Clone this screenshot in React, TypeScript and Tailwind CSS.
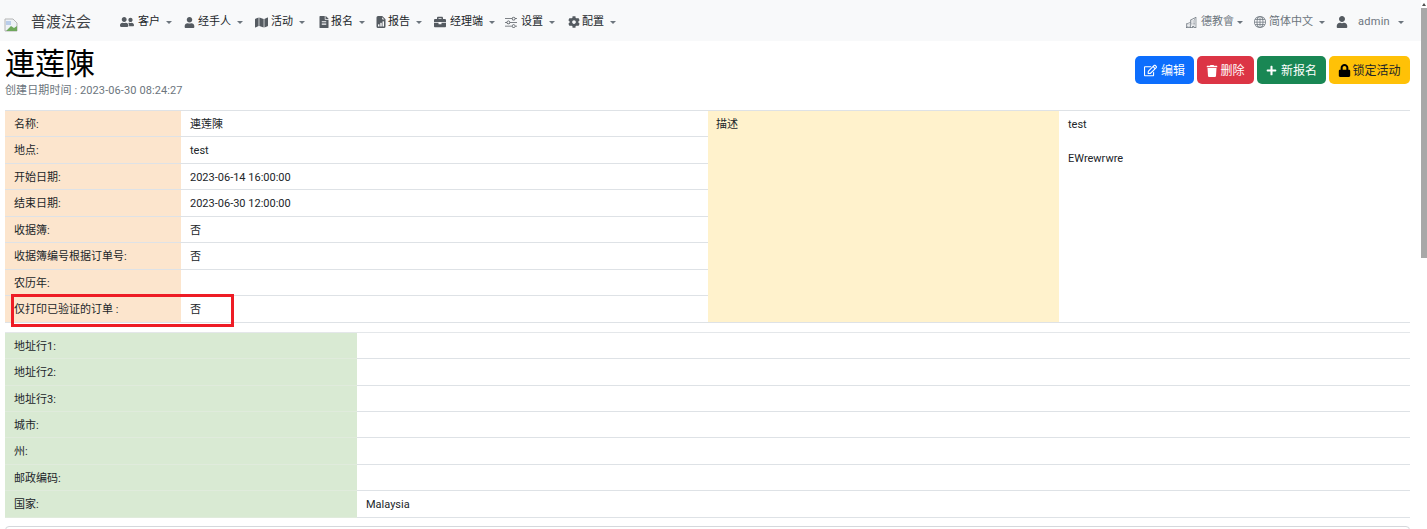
import React from "react";
import { FaUserFriends, FaUser, FaMap, FaFileAlt, FaBriefcase, FaCog, FaRegEdit, FaTrash, FaPlus, FaLock } from "react-icons/fa";
import { BsFileEarmarkBarGraphFill, BsSliders, BsBuildings, BsGlobe } from "react-icons/bs";

const FONT = { fontFamily: 'Roboto,"Noto Sans CJK SC",sans-serif' };

function Caret({ className = "" }: { className?: string }) {
  return <span className={"inline-block w-0 h-0 border-x-[3px] border-x-transparent border-t-[3.5px] border-t-[#6c757d] " + className} />;
}

function NavItem({ icon, label, iconWidth, margin }: { icon: React.ReactNode; label: string; iconWidth: string; margin: string }) {
  return (
    <div className={"flex items-center text-[11px] text-[#212529] whitespace-nowrap " + margin}>
      <span className={"text-[#555b61] text-[12px] flex items-center " + iconWidth}>{icon}</span>
      <span>{label}</span>
      <Caret className="ml-[6px]" />
    </div>
  );
}

const info: [string, string][] = [
  ["名称:", "連莲陳"],
  ["地点:", "test"],
  ["开始日期:", "2023-06-14 16:00:00"],
  ["结束日期:", "2023-06-30 12:00:00"],
  ["收据簿:", "否"],
  ["收据簿编号根据订单号:", "否"],
  ["农历年:", ""],
  ["仅打印已验证的订单 :", "否"],
];

const address: [string, string][] = [
  ["地址行1:", ""],
  ["地址行2:", ""],
  ["地址行3:", ""],
  ["城市:", ""],
  ["州:", ""],
  ["邮政编码:", ""],
  ["国家:", "Malaysia"],
];

export default function App() {
  return (
    <div className="relative h-[529px] w-[1427px] overflow-hidden bg-white text-[#212529] text-[11px]" style={FONT}>
      <div className="w-[1421px]">
        <nav className="h-[41px] bg-[#f8f9fa] flex items-center justify-between pl-[4px] pr-[17px] pt-[3px]">
          <div className="flex items-center">
            <svg width="14" height="14" viewBox="0 0 14 14" className="mt-[5px]">
              <path d="M1 1h8l4 4v8H1z" fill="#eef2f7" stroke="#b5b5b5" />
              <path d="M2 3h5v4H2z" fill="#b9cdea" />
              <path d="M2 13l5-5 3 2 3-2v5z" fill="#6fa85c" />
            </svg>
            <span className="ml-[13px] text-[15px] text-[#3f4347] w-[75px] whitespace-nowrap">普渡法会</span>
            <div className="ml-[14px] flex items-center">
              <NavItem icon={<FaUserFriends className="text-[14px]" />} label="客户" iconWidth="w-[18px]" margin="ml-0" />
              <NavItem icon={<FaUser className="text-[11px] ml-[1px]" />} label="经手人" iconWidth="w-[15px]" margin="ml-[11px]" />
              <NavItem icon={<FaMap className="text-[13px]" />} label="活动" iconWidth="w-[16px]" margin="ml-[12px]" />
              <NavItem icon={<FaFileAlt className="text-[12px]" />} label="报名" iconWidth="w-[13px]" margin="ml-[13px]" />
              <NavItem icon={<BsFileEarmarkBarGraphFill className="text-[12px]" />} label="报告" iconWidth="w-[13px]" margin="ml-[10px]" />
              <NavItem icon={<FaBriefcase />} label="经理端" iconWidth="w-[16px]" margin="ml-[12px]" />
              <NavItem icon={<BsSliders />} label="设置" iconWidth="w-[16px]" margin="ml-[10px]" />
              <NavItem icon={<FaCog />} label="配置" iconWidth="w-[14px]" margin="ml-[13px]" />
            </div>
          </div>
          <div className="flex items-center text-[11px] text-[#6c757d] whitespace-nowrap">
            <BsBuildings className="text-[11px] mr-[4px]" />
            <span>德教會</span>
            <Caret className="ml-[3px]" />
            <BsGlobe className="text-[12px] ml-[11px] mr-[3px]" />
            <span>简体中文</span>
            <Caret className="ml-[6px]" />
            <FaUser className="text-[12px] ml-[11px] text-[#555b61]" />
            <span className="ml-[10px] tracking-[0.3px]">admin</span>
            <Caret className="ml-[8px]" />
          </div>
        </nav>

        <header className="h-[69px] flex justify-between pl-[5px] pr-[11px]">
          <div>
            <h1 className="text-[30px] leading-[44px] mt-[1px] text-black">連莲陳</h1>
            <p className="text-[11px] leading-[14px] tracking-[0.1px] text-[#6c757d] -mt-[2px]">创建日期时间 : 2023-06-30 08:24:27</p>
          </div>
          <div className="flex gap-[3px] mt-[15px] h-[28px] text-[12px]">
            <button className="flex items-center justify-center w-[59px] pt-[1px] rounded-[5px] bg-[#0d6efd] text-white"><FaRegEdit className="text-[13px] mr-[4px]" />编辑</button>
            <button className="flex items-center justify-center w-[57px] pt-[1px] rounded-[5px] bg-[#dc3545] text-white"><FaTrash className="text-[12px] mr-[2px]" />删除</button>
            <button className="flex items-center justify-center w-[69px] pt-[1px] rounded-[5px] bg-[#198754] text-white"><FaPlus className="text-[11px] mr-[4px]" />新报名</button>
            <button className="flex items-center justify-center w-[81px] pt-[1px] rounded-[5px] bg-[#ffc107] text-[#212529]"><FaLock className="text-[13px] text-black mr-[1px]" />锁定活动</button>
          </div>
        </header>

        <div className="ml-[5px] w-[1405px] border-t border-[#dee2e6] grid grid-cols-[703px_702px]">
          <div>
            {info.map(([k, v]) => (
              <div key={k} className="grid grid-cols-[176px_527px] grid-rows-[100%] h-[26.45px] border-b border-[#dee2e6] leading-[28px]">
                <div className="bg-[#fce5cd] pl-[9px] whitespace-nowrap">{k}</div>
                <div className="pl-[9px]">{v}</div>
              </div>
            ))}
          </div>
          <div className="grid grid-cols-[351px_351px] border-b border-[#dee2e6]">
            <div className="bg-[#fff2cc] pl-[8px] leading-[28px]">描述</div>
            <div className="pl-[9px] leading-[28px]">
              <div>test</div>
              <div className="mt-[6px]">EWrewrwre</div>
            </div>
          </div>
        </div>

        <div className="ml-[5px] mt-[9.4px] w-[1405px] border-t border-[#e4e7ea]">
          {address.map(([k, v]) => (
            <div key={k} className="grid grid-cols-[352px_1053px] grid-rows-[100%] h-[26.4px] border-b border-[#dee2e6] leading-[28px]">
              <div className="bg-[#d9ead3] pl-[9px] -mb-px border-b border-[#e0ebdc]">{k}</div>
              <div className="pl-[9px]">{v}</div>
            </div>
          ))}
        </div>

        <div className="ml-[5px] mt-[8px] w-[1405px] h-[20px] border border-[#d5d8dc] rounded-[4px]" />
      </div>

      <div className="absolute left-[11px] top-[294px] w-[223px] h-[33px] border-[3px] border-[#ee1c25]" />

      <div className="absolute right-0 top-0 w-[6px] h-full bg-white">
        <div className="mx-auto mt-[3px] w-0 h-0 border-x-[2px] border-x-transparent border-b-[3px] border-b-[#505050]" />
        <div className="mt-[2px] w-[6px] h-[250px] bg-[#a8a8a8]" />
      </div>
    </div>
  );
}
